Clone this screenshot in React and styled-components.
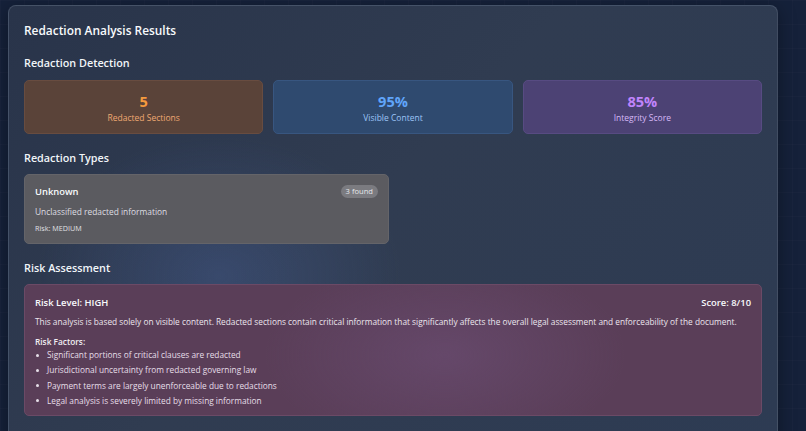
import React from "react";
import styled, { createGlobalStyle } from "styled-components";

const GlobalStyle = createGlobalStyle`
  html, body {
    margin: 0;
    padding: 0;
    height: 100%;
  }
  body {
    background-color: #15213a;
    background-image:
      linear-gradient(rgba(255,255,255,0.015) 1px, transparent 1px),
      linear-gradient(90deg, rgba(255,255,255,0.015) 1px, transparent 1px);
    background-size: 24px 24px;
    font-family: "Open Sans", "Noto Sans", sans-serif;
    color: #f1f5f9;
    overflow: hidden;
  }
`;

const Page = styled.div`
  padding: 5px 28px 0 8px;
  height: 431px;
  box-sizing: border-box;
`;

const Panel = styled.section`
  border: 1px solid rgba(148, 163, 184, 0.22);
  border-radius: 8px;
  padding: 13px 15px 20px;
  background:
    radial-gradient(ellipse 260px 200px at 210px 270px, rgba(74, 100, 160, 0.35), transparent 70%),
    linear-gradient(135deg, #29344a 0%, #303c51 45%, #2d3b53 100%);
  box-shadow: 0 4px 18px rgba(0, 0, 0, 0.35);
  min-height: 440px;
`;

const Title = styled.h2`
  margin: 0 0 14px;
  font-size: 11.9px;
  font-weight: 600;
  color: #f8fafc;
  line-height: 22px;
`;

const SectionTitle = styled.h3`
  margin: 0 0 ${(p) => p.$gap || 8}px;
  font-size: 10.8px;
  font-weight: 600;
  color: #f1f5f9;
  line-height: 16px;
`;

const Section = styled.div`
  margin-bottom: ${(p) => p.$space || 16}px;
`;

const StatGrid = styled.div`
  display: grid;
  grid-template-columns: repeat(3, 1fr);
  gap: 10px;
`;

const tones = {
  orange: { bg: "#5a4339", border: "#684c40", num: "#f59a3e", label: "#eea872" },
  blue: { bg: "#2f4a6f", border: "#385680", num: "#60a5fa", label: "#9cc4f6" },
  purple: { bg: "#4c4274", border: "#574b82", num: "#c084fc", label: "#d6b8f6" },
};

const StatCard = styled.div`
  height: 54px;
  box-sizing: border-box;
  border-radius: 5px;
  background: ${(p) => tones[p.$tone].bg};
  border: 1px solid ${(p) => tones[p.$tone].border};
  display: flex;
  flex-direction: column;
  align-items: center;
  justify-content: center;
`;

const StatValue = styled.div`
  font-size: 14.6px;
  font-weight: 700;
  line-height: 20px;
  color: ${(p) => tones[p.$tone].num};
`;

const StatLabel = styled.div`
  font-size: 8.5px;
  line-height: 13px;
  color: ${(p) => tones[p.$tone].label};
`;

const TypeCard = styled.div`
  width: 365px;
  box-sizing: border-box;
  padding: 10px 10px 10px 10px;
  border-radius: 5px;
  background: #5b5b60;
  border: 1px solid #646469;
`;

const CardHead = styled.div`
  display: flex;
  justify-content: space-between;
  align-items: center;
`;

const TypeName = styled.div`
  font-size: 9.4px;
  font-weight: 600;
  color: #f8fafc;
`;

const Badge = styled.span`
  font-size: 7.6px;
  color: #e5e7eb;
  background: #7b7b80;
  border-radius: 8px;
  padding: 1px 5px;
  line-height: 11px;
`;

const TypeDesc = styled.div`
  margin-top: 7px;
  font-size: 8.4px;
  color: #dedee2;
  line-height: 13px;
`;

const TypeRisk = styled.div`
  margin-top: 5px;
  font-size: 7.2px;
  color: #e0e0e4;
  line-height: 10px;
`;

const RiskCard = styled.div`
  box-sizing: border-box;
  padding: 11px 10px 7px 10px;
  border-radius: 5px;
  border: 1px solid #6b4a66;
  background:
    radial-gradient(ellipse 240px 130px at 420px 70px, rgba(110, 80, 120, 0.55), transparent 75%),
    #5a3e58;
`;

const RiskTitle = styled.div`
  font-size: 9.4px;
  font-weight: 600;
  color: #f8fafc;
  line-height: 14px;
`;

const RiskText = styled.p`
  margin: 6px 0 9px;
  font-size: 8.3px;
  color: #ece6ee;
  line-height: 12px;
`;

const FactorsTitle = styled.div`
  font-size: 8.3px;
  font-weight: 600;
  color: #f1eef3;
  line-height: 10px;
`;

const FactorList = styled.ul`
  margin: 0;
  padding: 0;
  list-style: none;
`;

const Factor = styled.li`
  position: relative;
  padding-left: 12px;
  font-size: 8.3px;
  color: #e6dfe8;
  line-height: 15.3px;

  &::before {
    content: "";
    position: absolute;
    left: 1px;
    top: 6.5px;
    width: 3px;
    height: 3px;
    border-radius: 50%;
    background: #e6dfe8;
  }
`;

const stats = [
  { tone: "orange", value: "5", label: "Redacted Sections" },
  { tone: "blue", value: "95%", label: "Visible Content" },
  { tone: "purple", value: "85%", label: "Integrity Score" },
];

const factors = [
  "Significant portions of critical clauses are redacted",
  "Jurisdictional uncertainty from redacted governing law",
  "Payment terms are largely unenforceable due to redactions",
  "Legal analysis is severely limited by missing information",
];

export default function App() {
  return (
    <>
      <GlobalStyle />
      <Page>
        <Panel>
          <Title>Redaction Analysis Results</Title>

          <Section $space={16}>
            <SectionTitle $gap={9}>Redaction Detection</SectionTitle>
            <StatGrid>
              {stats.map((s) => (
                <StatCard key={s.label} $tone={s.tone}>
                  <StatValue $tone={s.tone}>{s.value}</StatValue>
                  <StatLabel $tone={s.tone}>{s.label}</StatLabel>
                </StatCard>
              ))}
            </StatGrid>
          </Section>

          <Section>
            <SectionTitle>Redaction Types</SectionTitle>
            <TypeCard>
              <CardHead>
                <TypeName>Unknown</TypeName>
                <Badge>3 found</Badge>
              </CardHead>
              <TypeDesc>Unclassified redacted information</TypeDesc>
              <TypeRisk>Risk: MEDIUM</TypeRisk>
            </TypeCard>
          </Section>

          <Section>
            <SectionTitle>Risk Assessment</SectionTitle>
            <RiskCard>
              <CardHead>
                <RiskTitle>Risk Level: HIGH</RiskTitle>
                <RiskTitle>Score: 8/10</RiskTitle>
              </CardHead>
              <RiskText>
                This analysis is based solely on visible content. Redacted
                sections contain critical information that significantly
                affects the overall legal assessment and enforceability of the
                document.
              </RiskText>
              <FactorsTitle>Risk Factors:</FactorsTitle>
              <FactorList>
                {factors.map((f) => (
                  <Factor key={f}>{f}</Factor>
                ))}
              </FactorList>
            </RiskCard>
          </Section>
        </Panel>
      </Page>
    </>
  );
}
